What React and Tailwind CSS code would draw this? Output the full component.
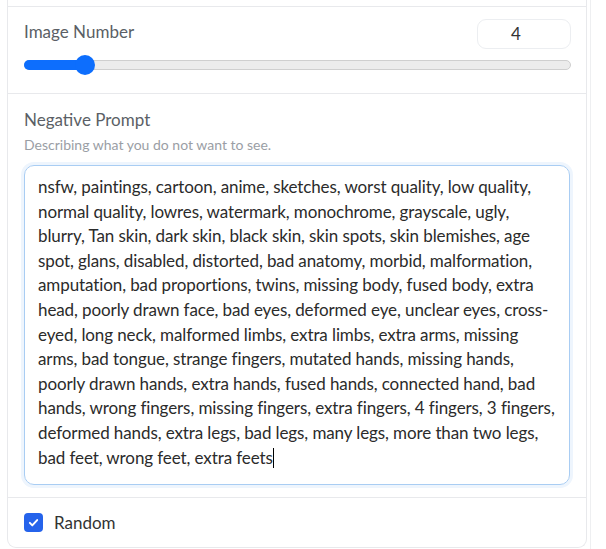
const lines = [
  "nsfw, paintings, cartoon, anime, sketches, worst quality, low quality,",
  "normal quality, lowres, watermark, monochrome, grayscale, ugly,",
  "blurry, Tan skin, dark skin, black skin, skin spots, skin blemishes, age",
  "spot, glans, disabled, distorted, bad anatomy, morbid, malformation,",
  "amputation, bad proportions, twins, missing body, fused body, extra",
  "head, poorly drawn face, bad eyes, deformed eye, unclear eyes, cross-",
  "eyed, long neck, malformed limbs, extra limbs, extra arms, missing",
  "arms, bad tongue, strange fingers, mutated hands, missing hands,",
  "poorly drawn hands, extra hands, fused hands, connected hand, bad",
  "hands, wrong fingers, missing fingers, extra fingers, 4 fingers, 3 fingers,",
  "deformed hands, extra legs, bad legs, many legs, more than two legs,",
  "bad feet, wrong feet, extra feets",
]

export default function App() {
  const value = 4
  // thumb sits about 11% along the track
  const pct = 11.1

  return (
    <div className="w-[606px] h-[549px] bg-white overflow-hidden flex font-['Lato','Open_Sans',sans-serif]">
      <div className="ml-[7px] w-[580px] h-[548px] border-x border-b border-[#e8e9ec] rounded-b-[9px] flex flex-col">
        <div className="h-[7px] border-b border-[#e8e9ec]" />

        <div className="h-[87px] border-b border-[#e8e9ec] pl-[16px] pr-[15px] pt-[12px]">
          <div className="flex items-center justify-between">
            <span className="text-[17px] text-[#5b5f66] -mt-[4px]">Image Number</span>
            <div className="w-[94px] h-[30px] rounded-[9px] border border-[#eceef1] flex items-center justify-center pr-[16px] text-[17px] text-[#333]">
              {value}
            </div>
          </div>
          <div className="relative mt-[6px] h-[20px] flex items-center">
            <div className="w-full h-[10px] rounded-full bg-[#ececec] border border-[#cfcfcf]" />
            <div className="absolute left-0 h-[10px] rounded-full bg-[#0d6efd]" style={{ width: `${pct}%` }} />
            <div
              className="absolute w-[20px] h-[20px] rounded-full bg-[#0d6efd] -translate-x-1/2"
              style={{ left: `${pct}%` }}
            />
          </div>
        </div>

        <div className="border-b border-[#e8e9ec] px-[16px] pt-[14px] pb-[12px]">
          <div className="text-[17px] text-[#5b5f66] leading-[24px]">Negative Prompt</div>
          <div className="text-[14px] text-[#9a9ea5] mt-[3px] leading-[20px]">Describing what you do not want to see.</div>
          <div className="mt-[10px] h-[320px] rounded-[10px] border border-[#a9cdf3] shadow-[0_0_0_3px_#eef5fd] px-[13px] pt-[9px] text-[17px] leading-[24.6px] text-[#2b2b2b] tracking-[-0.1px]">
            {lines.map((l, i) => (
              <div key={i} className="whitespace-nowrap">
                {l}
                {i === lines.length - 1 && <span className="inline-block w-[1.5px] h-[20px] bg-black align-[-4px]" />}
              </div>
            ))}
          </div>
        </div>

        <div className="flex-1 flex items-center px-[16px] gap-[11px]">
          <div className="w-[19px] h-[19px] rounded-[4px] bg-[#2563eb] flex items-center justify-center">
            <svg viewBox="0 0 16 16" className="w-[13px] h-[13px]" fill="none" stroke="white" strokeWidth="2.4" strokeLinecap="round" strokeLinejoin="round">
              <path d="M3.5 8.5l3 3 6-6.5" />
            </svg>
          </div>
          <span className="text-[17px] text-[#333]">Random</span>
        </div>
      </div>
      <div className="ml-[3px] h-full border-l border-[#eeeff1]" />
    </div>
  )
}
